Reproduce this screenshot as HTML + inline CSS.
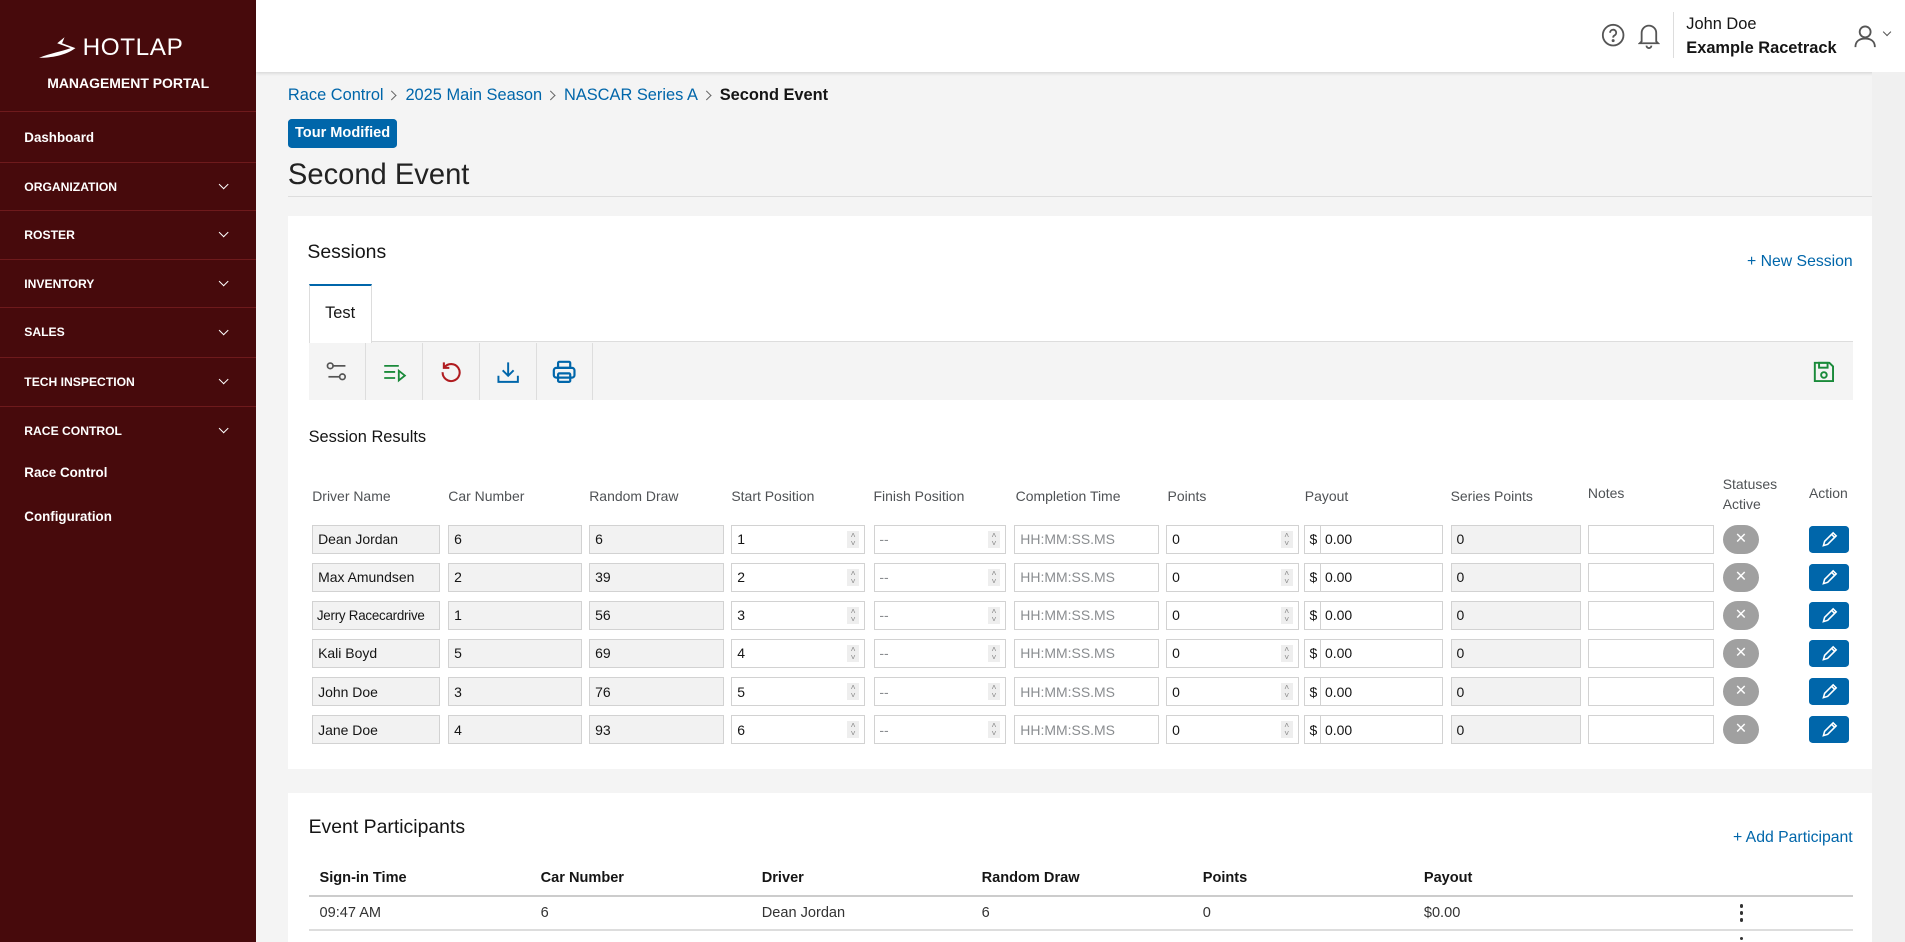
<!DOCTYPE html>
<html><head><meta charset="utf-8">
<style>
html{zoom:1.2149}
*{box-sizing:border-box;margin:0;padding:0}
body{width:1568px;height:775px;overflow:hidden;font-family:"Liberation Sans",sans-serif;background:#f4f4f4;color:#151515;position:relative}
.a{position:absolute}
#side{left:0;top:0;width:211px;height:775px;background:#470a0c;color:#fff}
#side .it{position:absolute;left:0;width:211px;border-top:1px solid #6e1a1c;font-weight:bold;font-size:10px;padding-left:20px}
#side .chev{position:absolute;right:24px;width:6px;height:6px;border-right:1.3px solid #fff;border-bottom:1.3px solid #fff;transform:rotate(45deg)}
#top{left:211px;top:0;width:1357px;height:59px;background:#fff;box-shadow:0 1px 3px rgba(0,0,0,.15)}
.card{background:#fff;position:absolute;left:237px;width:1304px}
.inp{position:absolute;height:24px;border:1px solid #d2d2d2;font-size:11.5px;padding-left:4px;display:flex;align-items:center;background:#fff;color:#151515;white-space:nowrap;overflow:hidden}
.ro{background:#f2f2f2}
.ph{color:#8a8d90}
.spin{position:absolute;right:4px;top:4px;width:10px;height:14px;background:#eee;font-size:7px;color:#888;text-align:center;line-height:7px}
.hd{position:absolute;font-size:11.5px;color:#4f5255}
.x{position:absolute;width:30px;height:24px;border-radius:12px;background:#a0a0a0;color:#fff;text-align:center;line-height:24px;font-size:12px}
.ed{position:absolute;width:33px;height:22px;border-radius:3px;background:#0066aa}
.tb{position:absolute;top:282px;width:47px;height:47px;border-right:1px solid #ddd}
.bc{display:inline-block;width:6px;height:6px;border-right:1.2px solid #666;border-top:1.2px solid #666;transform:rotate(45deg);margin:0 8px 1px 4px}
</style></head><body>
<div id="side" class="a">
  <svg class="a" style="left:32px;top:30px" width="34" height="20" viewBox="0 0 34 20"><path d="M0 18 C10 14 18 13 26 10 L15 6 L21 1 L19 6 L30 10 C22 16 10 18 0 18Z" fill="#fff"/></svg>
  <div class="a" style="left:68px;top:28px;font-size:20px;letter-spacing:0.5px;color:#fff">HOTLAP</div>
  <div class="a" style="left:0;width:211px;text-align:center;top:62px;font-size:11.5px;font-weight:bold">MANAGEMENT PORTAL</div>
  <div class="it" style="top:91px;height:42px;line-height:42px;font-size:11px">Dashboard</div>
  <div class="it" style="top:133px;height:40px;line-height:40px">ORGANIZATION<span class="chev" style="top:15px"></span></div>
  <div class="it" style="top:173px;height:40px;line-height:40px">ROSTER<span class="chev" style="top:15px"></span></div>
  <div class="it" style="top:213px;height:40px;line-height:40px">INVENTORY<span class="chev" style="top:15px"></span></div>
  <div class="it" style="top:253px;height:41px;line-height:41px">SALES<span class="chev" style="top:15px"></span></div>
  <div class="it" style="top:294px;height:40px;line-height:40px">TECH INSPECTION<span class="chev" style="top:15px"></span></div>
  <div class="it" style="top:334px;height:40px;line-height:40px">RACE CONTROL<span class="chev" style="top:15px"></span></div>
  <div class="a" style="left:20px;top:383px;font-size:11px;font-weight:bold">Race Control</div>
  <div class="a" style="left:20px;top:419px;font-size:11px;font-weight:bold">Configuration</div>
</div>
<div id="top" class="a">
  <svg class="a" style="left:1107px;top:19px" width="20" height="20" viewBox="0 0 20 20" fill="none" stroke="#555" stroke-width="1.5"><circle cx="10" cy="10" r="8.5"/><path d="M7.5 8a2.5 2.5 0 1 1 3.5 2.3c-.8.4-1 .9-1 1.7"/><circle cx="10" cy="14.5" r=".5" fill="#555"/></svg>
  <svg class="a" style="left:1137px;top:18px" width="18" height="22" viewBox="0 0 18 22" fill="none" stroke="#555" stroke-width="1.5"><path d="M3 16V9a6 6 0 0 1 12 0v7l1.5 1.5h-15Z"/><path d="M7 19.5a2 2 0 0 0 4 0"/></svg>
  <div class="a" style="left:1166px;top:10px;width:1px;height:38px;background:#ddd"></div>
  <div class="a" style="left:1177px;top:12px;font-size:13.5px;color:#151515">John Doe</div>
  <div class="a" style="left:1177px;top:32px;font-size:13.5px;font-weight:bold">Example Racetrack</div>
  <svg class="a" style="left:1314px;top:20px" width="20" height="20" viewBox="0 0 20 20" fill="none" stroke="#555" stroke-width="1.5"><circle cx="10" cy="6.5" r="4.5"/><path d="M2 19c0-5 3.5-7 8-7s8 2 8 7"/></svg>
  <div class="a" style="left:1340px;top:24px;width:5px;height:5px;border-right:1px solid #555;border-bottom:1px solid #555;transform:rotate(45deg)"></div>
</div>
<div class="a" style="left:237px;top:71px;font-size:13.5px;color:#0066aa;white-space:nowrap">Race Control<span class="bc"></span>2025 Main Season<span class="bc"></span>NASCAR Series A<span class="bc"></span><b style="color:#151515">Second Event</b></div>
<div class="a" style="left:237px;top:98px;width:90px;height:24px;background:#0066aa;border-radius:3px;color:#fff;font-size:12px;font-weight:bold;text-align:center;line-height:24px">Tour Modified</div>
<div class="a" style="left:237px;top:131px;font-size:24px;color:#222">Second Event</div>
<div class="a" style="left:237px;top:161px;width:1304px;height:1px;background:#ddd"></div>
<div class="a" style="left:1541px;top:59px;width:27px;height:716px;background:#f0f0f0"></div>

<div class="card" style="top:178px;height:455px">
  <div class="a" style="left:16px;top:20px;font-size:16px">Sessions</div>
  <div class="a" style="right:16px;top:30px;font-size:13px;color:#0066aa">+ New Session</div>
  <div class="a" style="left:17px;top:56px;width:52px;height:48px;border-top:2px solid #0066aa;border-left:1px solid #ddd;border-right:1px solid #ddd;background:#fff;font-size:13.5px;line-height:46px;text-align:center;z-index:2">Test</div>
  <div class="a" style="left:17px;top:103px;width:1271px;height:48px;background:#f4f4f4;border-top:1px solid #ddd"></div>
</div>
<div class="tb" style="left:254px"><svg class="a" style="left:14px;top:15px" width="18" height="18" viewBox="0 0 18 18" fill="none" stroke="#555" stroke-width="1.4"><circle cx="3.5" cy="4" r="2.3"/><path d="M6 4h10"/><circle cx="13.5" cy="13" r="2.3"/><path d="M2 13h9"/></svg></div>
<div class="tb" style="left:301px"><svg class="a" style="left:14px;top:15px" width="20" height="18" viewBox="0 0 20 18" fill="none" stroke="#1a8a3a" stroke-width="1.5"><path d="M1 4h12M1 9h9M1 14h9M13 8v8l5-4Z"/></svg></div>
<div class="tb" style="left:348px"><svg class="a" style="left:13px;top:14px" width="20" height="20" viewBox="0 0 20 20" fill="none" stroke="#b01c20" stroke-width="1.7"><path d="M4.5 6A7 7 0 1 1 3 10"/><path d="M4 2v4.5h4.5"/></svg></div>
<div class="tb" style="left:395px"><svg class="a" style="left:13px;top:14px" width="20" height="20" viewBox="0 0 20 20" fill="none" stroke="#0066aa" stroke-width="1.6"><path d="M10 2v11M5.5 8.5 10 13l4.5-4.5M2 13v5h16v-5"/></svg></div>
<div class="tb" style="left:441px"><svg class="a" style="left:13px;top:14px" width="20" height="20" viewBox="0 0 20 20" fill="none" stroke="#0066aa" stroke-width="1.8"><rect x="5" y="1.5" width="10" height="5" rx="1"/><rect x="1.5" y="6.5" width="17" height="8" rx="2"/><rect x="5" y="11" width="10" height="7" rx="1"/></svg></div>
<svg class="a" style="left:1492px;top:297px" width="18" height="18" viewBox="0 0 18 18" fill="none" stroke="#1a8a3a" stroke-width="1.6"><path d="M1.5 1.5h12l3 3v12h-15Z"/><rect x="5" y="1.5" width="7" height="4"/><circle cx="9" cy="11.5" r="2.3"/></svg>
<div class="a" style="left:254px;top:352px;font-size:13.5px">Session Results</div>

<div class="hd" style="left:257px;top:402px">Driver Name</div>
<div class="hd" style="left:369px;top:402px">Car Number</div>
<div class="hd" style="left:485px;top:402px">Random Draw</div>
<div class="hd" style="left:602px;top:402px">Start Position</div>
<div class="hd" style="left:719px;top:402px">Finish Position</div>
<div class="hd" style="left:836px;top:402px">Completion Time</div>
<div class="hd" style="left:961px;top:402px">Points</div>
<div class="hd" style="left:1074px;top:402px">Payout</div>
<div class="hd" style="left:1194px;top:402px">Series Points</div>
<div class="hd" style="left:1307px;top:399px">Notes</div>
<div class="hd" style="left:1418px;top:390px;line-height:17px">Statuses<br>Active</div>
<div class="hd" style="left:1489px;top:399px">Action</div>

<div id="rows"></div>
<script>
var d=[["Dean Jordan",6,6,1],["Max Amundsen",2,39,2],["Jerry Racecardrive",1,56,3],["Kali Boyd",5,69,4],["John Doe",3,76,5],["Jane Doe",4,93,6]];
var h="";
d.forEach(function(r,i){var y=432+i*31.3;
h+='<div class="inp ro" style="left:257px;top:'+y+'px;width:105px;'+(i==2?'font-size:11px;letter-spacing:-0.2px;padding-left:3px':'')+'">'+r[0]+'</div>';
h+='<div class="inp ro" style="left:369px;top:'+y+'px;width:110px">'+r[1]+'</div>';
h+='<div class="inp ro" style="left:485px;top:'+y+'px;width:111px">'+r[2]+'</div>';
h+='<div class="inp" style="left:602px;top:'+y+'px;width:110px">'+r[3]+'<span class="spin">&#x2c4;<br>&#x2c5;</span></div>';
h+='<div class="inp ph" style="left:719px;top:'+y+'px;width:109px">--<span class="spin">&#x2c4;<br>&#x2c5;</span></div>';
h+='<div class="inp ph" style="left:835px;top:'+y+'px;width:119px">HH:MM:SS.MS</div>';
h+='<div class="inp" style="left:960px;top:'+y+'px;width:109px">0<span class="spin">&#x2c4;<br>&#x2c5;</span></div>';
h+='<div class="inp" style="left:1073px;top:'+y+'px;width:115px">$<span style="position:absolute;left:13px;top:0;bottom:0;border-left:1px solid #d2d2d2;padding-left:3px;display:flex;align-items:center">0.00</span></div>';
h+='<div class="inp ro" style="left:1194px;top:'+y+'px;width:107px">0</div>';
h+='<div class="inp" style="left:1307px;top:'+y+'px;width:104px"></div>';
h+='<div class="x" style="left:1418px;top:'+y+'px">&#x2715;</div>';
h+='<div class="ed" style="left:1489px;top:'+(y+1)+'px"><svg style="position:absolute;left:10px;top:4px" width="14" height="14" viewBox="0 0 14 14" fill="none" stroke="#fff" stroke-width="1.3"><path d="M2 12l1-3.5 7-7 2.5 2.5-7 7Z M9 3l2.5 2.5"/></svg></div>';
});
document.getElementById("rows").innerHTML=h;
</script>

<div class="card" style="top:653px;height:122px">
  <div class="a" style="left:17px;top:19px;font-size:16px">Event Participants</div>
  <div class="a" style="right:16px;top:29px;font-size:13px;color:#0066aa">+ Add Participant</div>
  <div class="a" style="left:17px;top:84px;width:1271px;height:1px;background:#ccc"></div>
  <div class="a" style="left:17px;top:112px;width:1271px;height:1px;background:#ddd"></div>
</div>
<div class="a" style="top:716px;left:0;width:1568px;font-size:12px;font-weight:bold">
  <span class="a" style="left:263px">Sign-in Time</span><span class="a" style="left:445px">Car Number</span><span class="a" style="left:627px">Driver</span><span class="a" style="left:808px">Random Draw</span><span class="a" style="left:990px">Points</span><span class="a" style="left:1172px">Payout</span>
</div>
<div class="a" style="top:745px;left:0;width:1568px;font-size:12px;color:#333">
  <span class="a" style="left:263px">09:47 AM</span><span class="a" style="left:445px">6</span><span class="a" style="left:627px">Dean Jordan</span><span class="a" style="left:808px">6</span><span class="a" style="left:990px">0</span><span class="a" style="left:1172px">$0.00</span>
</div>
<div class="a" style="left:1432px;top:744px;width:3px;height:3px;border-radius:2px;background:#333"></div>
<div class="a" style="left:1432px;top:750px;width:3px;height:3px;border-radius:2px;background:#333"></div>
<div class="a" style="left:1432px;top:756px;width:3px;height:3px;border-radius:2px;background:#333"></div>
<div class="a" style="left:1432px;top:771px;width:3px;height:3px;border-radius:2px;background:#333"></div>
</body></html>
